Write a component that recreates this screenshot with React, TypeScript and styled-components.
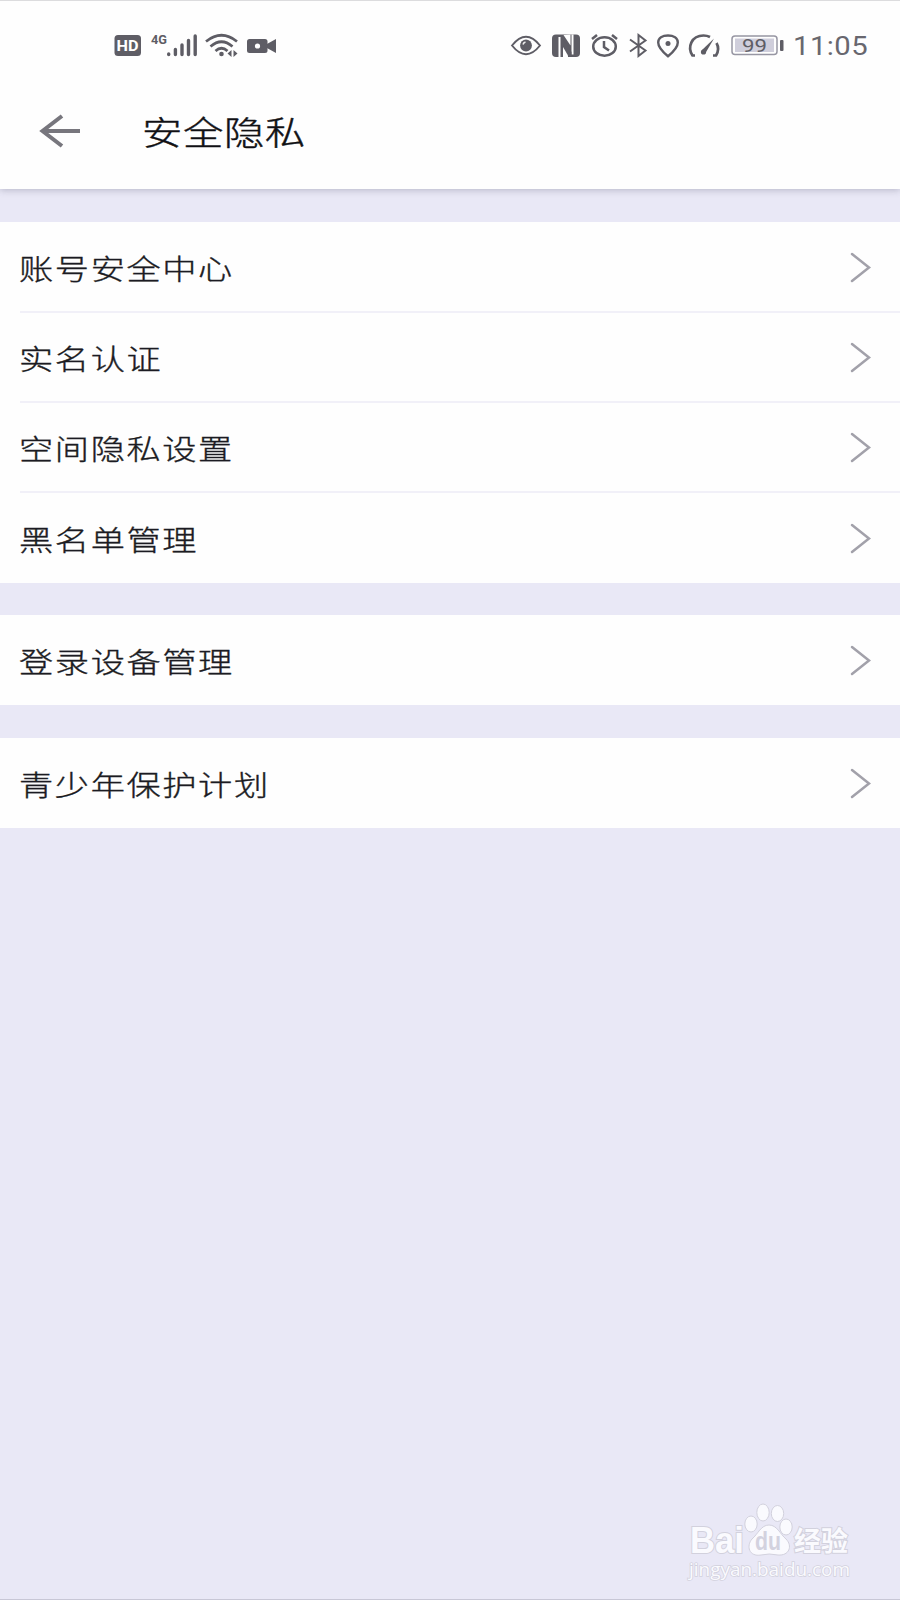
import React from 'react';
import styled, { createGlobalStyle } from 'styled-components';

const GlobalStyle = createGlobalStyle`
  * { box-sizing: border-box; }
  body { margin: 0; background: #e9e8f6; }
`;

const cjk = `'Noto Sans CJK SC', sans-serif`;

const Screen = styled.div`
  display: flex;
  flex-direction: column;
  width: 900px;
  height: 1600px;
  overflow: hidden;
  background: #e9e8f6;
  border-top: 1px solid #dcdcde;
  border-bottom: 1px solid #c8c7d6;
  font-family: ${cjk};
`;

const Header = styled.header`
  display: flex;
  flex-direction: column;
  height: 188px;
  flex: none;
  background: #fefefe;
  box-shadow: 0 1px 7px rgba(60, 60, 90, 0.3);
`;

const StatusBar = styled.div`
  display: flex;
  justify-content: space-between;
  height: 60px;
  padding: 29px 31px 0 114px;
  color: #5e5d65;
`;

const IconGroup = styled.div`
  display: flex;
  height: 30px;
`;

const Glyph = styled.svg<{ $w: number; $gap?: number }>`
  display: block;
  flex: none;
  width: ${(p) => p.$w}px;
  height: 30px;
  margin-right: ${(p) => p.$gap ?? 0}px;
  overflow: visible;
  fill: none;
  stroke: currentColor;
  stroke-width: 2.2;
`;

const Clock = styled.span`
  width: 76px;
  padding-top: 2px;
  font: 25px/30px Roboto, sans-serif;
  white-space: nowrap;
  letter-spacing: 0.4px;
  transform: scaleX(1.17);
  transform-origin: left center;
  color: #68676f;
`;

const TitleBar = styled.div`
  display: flex;
  align-items: center;
  height: 128px;
  padding: 12px 0 0 39px;
`;

const BackArrow = styled.svg`
  width: 42px;
  height: 36px;
  margin-right: 61px;
  fill: none;
  stroke: #77767d;
  stroke-width: 4;
`;

const Title = styled.h1`
  margin: 0;
  font: 300 33px/48px ${cjk};
  letter-spacing: 0.6px;
  white-space: nowrap;
  color: #101014;
  -webkit-text-stroke: 0.45px #101014;
  transform: scaleX(1.22);
  transform-origin: left center;
`;

const Group = styled.section`
  margin-top: 32.5px;
  flex: none;
  background: #fefefe;
`;

const Row = styled.div`
  display: flex;
  align-items: center;
  justify-content: space-between;
  height: 90.3px;
  margin-left: 20px;
  padding-right: 28px;

  & + & {
    box-shadow: 0 -1px 0 #f1f0f8, inset 0 1px 0 #f1f0f8;
  }
`;

const Label = styled.span`
  margin-left: -1px;
  padding-top: 2px;
  font: 300 28.5px/40px ${cjk};
  letter-spacing: 1.35px;
  white-space: nowrap;
  color: #1b1b22;
  -webkit-text-stroke: 0.35px #1b1b22;
  transform: scaleX(1.2);
  transform-origin: left center;
`;

const Chevron = styled.svg`
  width: 22px;
  height: 32px;
  fill: none;
  stroke: #a2a1aa;
  stroke-width: 2.5;
  stroke-linecap: round;
`;

const Watermark = styled.footer`
  align-self: flex-end;
  width: 166px;
  height: 80px;
  margin: auto 46px 16px 0;
`;

const Mark = styled.svg`
  display: block;
  overflow: visible;
  fill: #fafafe;
  stroke: #d2d1dd;
  stroke-width: 1;
`;

const groups = [
  ['账号安全中心', '实名认证', '空间隐私设置', '黑名单管理'],
  ['登录设备管理'],
  ['青少年保护计划'],
];

const LeftStatus = () => (
  <IconGroup>
    <Glyph $w={27} $gap={10}>
      <rect x="0.5" y="5" width="26.5" height="21" rx="3.5" fill="currentColor" stroke="none" />
      <text x="2.5" y="21" textLength="22" lengthAdjust="spacingAndGlyphs" fontSize="14.5" fontWeight="700" fontFamily="Roboto, sans-serif" fill="#fff" stroke="none">HD</text>
    </Glyph>
    <Glyph $w={46} $gap={8}>
      <text x="0" y="13.5" textLength="16" lengthAdjust="spacingAndGlyphs" fontSize="13.5" fontWeight="700" fontFamily="Roboto, sans-serif" fill="currentColor" stroke="none">4G</text>
      <g strokeWidth="3.4" strokeLinecap="round">
        <path d="M17.7 24v.5M24.4 19.5v5M31 15v9.5M37.5 10.5v14M44.2 6v18.5" />
      </g>
    </Glyph>
    <Glyph $w={34} $gap={8}>
      <path d="M1 11.500Q16.500-1 32 11.500M5.500 16.500Q16.500 7 27.500 16.500M10.500 21Q16.500 15.500 22.500 21" strokeWidth="2.700" />
      <circle cx="16.500" cy="24" r="2.300" fill="currentColor" stroke="none" />
      <path d="M26.500 20v7l-4-3.500zM28.500 20v7l4-3.500z" fill="currentColor" stroke="none" />
    </Glyph>
    <Glyph $w={29}>
      <rect x="0" y="9" width="20.500" height="14" rx="2.500" fill="currentColor" stroke="none" />
      <path d="M19 14.500l10-5.500v14l-10-5.500z" fill="currentColor" stroke="none" />
      <circle cx="10.500" cy="16" r="2.600" fill="#fff" stroke="none" />
    </Glyph>
  </IconGroup>
);

const RightStatus = () => (
  <IconGroup>
    <Glyph $w={30} $gap={11}>
      <path d="M1 15.500Q15-2 29 15.500Q15 33 1 15.500z" strokeWidth="1.900" />
      <circle cx="15" cy="15.500" r="5.900" fill="currentColor" stroke="none" />
      <path d="M12 14.500q.5-2 2.500-2.500" stroke="#eee" strokeWidth="1.500" />
    </Glyph>
    <Glyph $w={28} $gap={11}>
      <rect x="0" y="4.500" width="28" height="22.500" rx="4" fill="currentColor" stroke="none" />
      <path d="M7.500 27V7M20.500 24.500V4.500M14 16V27" stroke="#fefefe" strokeWidth="2" />
      <path d="M9.500 7L19.500 22V26.500L15.500 27L9.500 17z" fill="currentColor" stroke="none" />
      <path d="M11.500 5L18.500 15.500V4.500z" fill="#fefefe" stroke="none" />
      <path d="M11 17L16 25.500V27H11z" fill="#fefefe" stroke="none" />
    </Glyph>
    <Glyph $w={27} $gap={11}>
      <ellipse cx="13.500" cy="16.500" rx="11.300" ry="9.300" strokeWidth="2.500" />
      <path d="M1 9l5-4M26 9L21 5M13 11v6l5 3.500" strokeWidth="2.500" />
    </Glyph>
    <Glyph $w={18} $gap={10}>
      <path d="M1 9.500L16.500 20.500L9.500 26V5L16.500 10.500L1 21.500" strokeWidth="2" />
    </Glyph>
    <Glyph $w={22} $gap={9}>
      <path d="M11 26.300C7 23 1.200 18 1.200 12.500C1.200 8 5.500 5.500 11 5.500S20.800 8 20.800 12.500C20.800 18 15 23 11 26.300z" strokeWidth="2.400" />
      <circle cx="11" cy="13.500" r="2.500" fill="currentColor" stroke="none" />
    </Glyph>
    <Glyph $w={32} $gap={11}>
      <path d="M7 25.500H4.500C-1 17 3.500 5.500 15.500 5.500Q19 5.500 22 7M28.500 13Q32 19 28 25.500H25" strokeWidth="2.700" />
      <path d="M13.500 20.500L26 8.500L17.500 23" fill="currentColor" stroke="none" />
      <circle cx="15.500" cy="22" r="2.600" fill="currentColor" stroke="none" />
    </Glyph>
    <Glyph $w={53} $gap={9}>
      <rect x="1" y="6" width="45" height="18.500" rx="3" stroke="#9796a3" strokeWidth="1.500" />
      <rect x="4" y="8.500" width="39" height="13.500" fill="#cfcedb" stroke="none" />
      <rect x="49" y="10" width="3.500" height="11" rx="1" fill="currentColor" stroke="none" />
      <text x="11" y="22" textLength="25" lengthAdjust="spacingAndGlyphs" fontSize="18.500" fontFamily="Roboto, sans-serif" fill="currentColor" stroke="none">99</text>
    </Glyph>
    <Clock>11:05</Clock>
  </IconGroup>
);

export default function App() {
  return (
    <Screen>
      <GlobalStyle />
      <Header>
        <StatusBar>
          <LeftStatus />
          <RightStatus />
        </StatusBar>
        <TitleBar>
          <BackArrow viewBox="0 0 42 36">
            <path d="M41 18H4M23 3L3.500 18L23 33" />
          </BackArrow>
          <Title>安全隐私</Title>
        </TitleBar>
      </Header>
      {groups.map((items) => (
        <Group key={items[0]}>
          {items.map((label) => (
            <Row key={label}>
              <Label>{label}</Label>
              <Chevron viewBox="0 0 22 32">
                <path d="M2 3L19 16.500L2 30" />
              </Chevron>
            </Row>
          ))}
        </Group>
      ))}
      <Watermark>
        <Mark width="166" height="80" viewBox="0 0 166 80">
          <text x="2" y="50" fontSize="36" textLength="54" lengthAdjust="spacingAndGlyphs" fontFamily="'Liberation Sans', sans-serif" fontWeight="700" paintOrder="stroke" strokeWidth="2">Bai</text>
          <ellipse cx="63" cy="21" rx="6.200" ry="8" />
          <ellipse cx="75" cy="9.500" rx="6.200" ry="8.500" />
          <ellipse cx="89.500" cy="10.500" rx="6.200" ry="8" />
          <ellipse cx="98" cy="24" rx="6.200" ry="8" />
          <path d="M81 22C89 22 92 31 98 36C105 43 101 53 90 52Q81 50 73 52C61 54 58 43 64 36C70 31 73 22 81 22z" />
          <text x="67" y="47" fontSize="25" textLength="26" lengthAdjust="spacingAndGlyphs" fontFamily="'Liberation Sans', sans-serif" fontWeight="700" fill="#d3d2df" stroke="none">du</text>
          <text x="106" y="48" fontSize="27" textLength="54" lengthAdjust="spacingAndGlyphs" fontFamily="'Noto Sans CJK SC', sans-serif" fontWeight="700" paintOrder="stroke" strokeWidth="2">经验</text>
          <text x="1" y="73" fontSize="18" textLength="161" lengthAdjust="spacingAndGlyphs" fontFamily="'Open Sans', sans-serif" paintOrder="stroke" strokeWidth="1.500">jingyan.baidu.com</text>
        </Mark>
      </Watermark>
    </Screen>
  );
}
